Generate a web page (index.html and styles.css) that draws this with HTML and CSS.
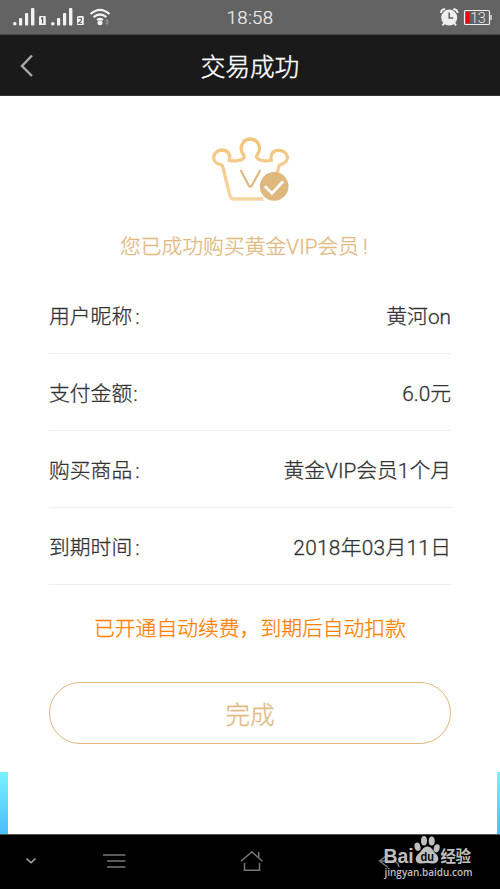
FILE: index.html
```html
<!DOCTYPE html>
<html lang="zh-CN">
<head>
<meta charset="utf-8">
<title>交易成功</title>
<link rel="stylesheet" href="styles.css">
</head>
<body>
<div class="phone">
  <header class="status">
    <svg class="signals" width="100" height="34" viewBox="0 0 100 34" fill="#f2f2f2">
      <g id="sim"><circle cx="1.8" cy="23.8" r="1.8"/><rect x="6" y="18" width="3.2" height="7.6" rx="1"/><rect x="12" y="13" width="3.2" height="12.6" rx="1"/><rect x="18" y="8" width="3.4" height="17.6" rx="1"/><path d="M27 16h4.8a1 1 0 0 1 1 1v8H26v-8z"/></g>
      <use href="#sim" x="38"/>
      <path d="M28 18.6l1.6-.8v5.7" fill="none" stroke="#555" stroke-width="1.3"/>
      <path d="M65.3 18.3h3v2.3l-2.800 2.600h3.500" fill="none" stroke="#555" stroke-width="1.1"/>
      <g fill="none" stroke="#f2f2f2" stroke-width="2.2"><path d="M77.600 14q9.400-8.400 18.800 0M80.600 17.200q6.400-5.400 12.800 0M84 20q3-2.300 6 0"/></g>
      <circle cx="87" cy="22.700" r="2.500"/>
      <path d="M92 21.400l2-2.400 2 2.400zM92 22.600h4l-2 2.300z" fill="#999"/>
    </svg>
    <span class="clock">18:58</span>
    <svg class="power" width="54" height="34" viewBox="0 0 54 34">
      <circle cx="10.200" cy="17.600" r="8" fill="#eee"/>
      <path d="M2 13Q2.200 9 6.200 9.300M14.200 9.300q4-.300 4.400 3.700M5.500 22.800l-2 2.500M15 22.800l2 2.500" fill="none" stroke="#eee" stroke-width="2"/>
      <path d="M10.200 12.500v5.500h4" fill="none" stroke="#606060" stroke-width="1.500"/>
      <rect x="25.500" y="10.500" width="25" height="14" rx="1" fill="none" stroke="#eee" stroke-width="1.200"/>
      <rect x="51.200" y="15" width="1.700" height="5" fill="#ccc"/>
      <rect x="27" y="12" width="3.600" height="11.200" fill="#f00"/>
      <text x="31.300" y="23" font-size="14.500" textLength="15.500" fill="#eee" class="charge">13</text>
    </svg>
  </header>
  <nav class="titlebar">
    <svg class="back" width="14" height="24" viewBox="0 0 14 24"><path d="M12 1.500L2 12l10 10" fill="none" stroke="#aaa" stroke-width="2.400"/></svg>
    <h1>交易成功</h1>
  </nav>
  <div class="backdrop">
    <main>
      <svg class="crown" width="100" height="80" viewBox="0 0 300 240" fill="none">
        <defs><linearGradient id="gold" x2="0" y2="1"><stop stop-color="#f3c47b"/><stop offset="1" stop-color="#f5d6a2"/></linearGradient></defs>
        <path d="M190 207H104Q92 207 89 195L69 112Q67 104 60 103C34 99 34 64 65 60C84 60 92 74 88 91Q102 94 114 92C130 90 136 82 130 74C118 60 122 28 151 27C180 28 184 60 172 74C166 82 174 90 188 92Q200 94 214 91C210 72 220 60 237 61C268 63 270 98 243 103Q238 104 236 110L231 132" stroke="url(#gold)" stroke-width="10"/>
        <path d="M123 122l23 44q5 8 10 0l24-44" stroke="#dfb87e" stroke-width="6.500" stroke-linecap="round"/>
        <circle cx="222.500" cy="169" r="43" fill="#dfb87e"/>
        <path d="M197 171l19 19 31-33" stroke="#fff" stroke-width="8.500" stroke-linecap="round"/>
      </svg>
      <p class="success">您已成功购买黄金VIP会员<span class="bang">!</span></p>
      <dl>
        <div><dt>用户昵称<span class="colon">:</span></dt><dd>黄河on</dd></div>
        <div><dt>支付金额<span class="colon near">:</span></dt><dd>6.0元</dd></div>
        <div><dt>购买商品<span class="colon">:</span></dt><dd>黄金VIP会员1个月</dd></div>
        <div><dt>到期时间<span class="colon">:</span></dt><dd class="date">2018年03月11日</dd></div>
      </dl>
      <p class="renew">已开通自动续费，到期后自动扣款</p>
      <button type="button">完成</button>
    </main>
  </div>
  <footer>
    <svg width="500" height="54" viewBox="0 0 500 54" fill="none" stroke="#777" stroke-width="1.500">
      <path d="M26.500 23.500l4.500 4.200 4.500-4.200" stroke="#aaa"/>
      <path d="M103 20h22.500M107 26h18.500M107 32h18.500" stroke-width="1.700"/>
      <path d="M241 26.200l10.700-9.300L262.500 26.200M258.700 22.500v-5.500M244.500 28v7.300h15V28"/>
      <path d="M388 19.500l-8.500 6.500 8.500 6.500M380 26h12q6 0 7 6"/>
      <g fill="#bfbfbf" stroke="none">
        <text class="brand" x="383.500" y="28" font-size="20.500" textLength="30" lengthAdjust="spacingAndGlyphs">Bai</text>
        <ellipse cx="417.500" cy="11.700" rx="2.900" ry="4.200" transform="rotate(-15 417.500 11.700)"/>
        <ellipse cx="424" cy="5.700" rx="3" ry="4.700"/>
        <ellipse cx="431.700" cy="6" rx="3" ry="4.600"/>
        <ellipse cx="436.700" cy="13.300" rx="2.900" ry="4.100" transform="rotate(15 436.700 13.300)"/>
        <path d="M427.500 11.500C432 11.500 433 16.500 436 19C440.500 23 438 28.800 433 28.500Q427 27.500 421 28.500C415 29 414 22.500 418.500 18.800C422 16 423 11.500 427.500 11.500Z"/>
        <text class="brand" x="420.500" y="25.800" font-size="12.500" textLength="13.500" lengthAdjust="spacingAndGlyphs" fill="#080808">du</text>
        <text class="jingyan" x="440.500" y="26.800" font-size="15.500" textLength="30.500">经验</text>
        <text class="site" x="384.500" y="40.500" font-size="11.500" textLength="88" lengthAdjust="spacingAndGlyphs">jingyan.baidu.com</text>
      </g>
    </svg>
  </footer>
</div>
</body>
</html>
```

FILE: styles.css
```css
* { box-sizing: border-box; }
body, h1, p, dl, dd { margin: 0; }
body { font-family: Roboto, "Noto Sans CJK SC", sans-serif; font-weight: 300; background: #000; }
.phone { width: 500px; height: 889px; display: flex; flex-direction: column; overflow: hidden; }
svg { display: block; }
.status { height: 35px; background: #636363; display: grid; grid-template-columns: 1fr auto 1fr; padding: 0 7px 0 13px; border-bottom: 1px solid #474747; }
.clock { font: 300 18.5px/37px Roboto, sans-serif; color: #eee; padding-right: 6px; letter-spacing: .3px; -webkit-text-stroke: .2px; }
.power { justify-self: end; }
.charge { font-family: Roboto, sans-serif; font-weight: 300; }
.titlebar { height: 61px; background: #1a1a1a; border-bottom: 1px solid #333; display: grid; grid-template-columns: 60px 1fr 60px; align-items: center; color: #fff; }
.back { margin-left: 20px; }
h1 { font-size: 24.6px; line-height: 56px; padding-top: 5px; font-weight: 300; text-align: center; -webkit-text-stroke: .45px; }
.backdrop { height: 738px; padding: 0 3px 0 8px; background: linear-gradient(#fff 676px, #78f1ff 676px, #4bbcff 738px); }
main { height: 738px; background: #fff; padding: 34px 46px 0 41px; }
.crown { margin: 0 auto; }
.success { margin-top: 21px; text-align: center; font-size: 20.8px; line-height: 32px; color: #e2b97f; -webkit-text-stroke: .3px; }
.bang { display: inline-block; width: 21px; padding-left: 4px; text-align: left; }
dl { margin-top: 14px; color: #333; -webkit-text-stroke: .3px; }
dl > div { height: 77px; display: flex; justify-content: space-between; border-bottom: 1px solid #eee; font-size: 20.8px; line-height: 72px; padding-top: 4px; }
.date { letter-spacing: .3px; margin-right: -.3px; }
.colon { margin-left: 3px; }
.colon.near { margin-left: 1px; }
.renew { margin-top: 28px; text-align: center; font-size: 20.8px; line-height: 32px; color: #ff8205; white-space: nowrap; -webkit-text-stroke: .3px; }
button { display: block; width: 402px; height: 62px; margin-top: 37px; padding: 0; border: 1.5px solid #e0b77e; border-radius: 31px; background: #fff; color: #e2b97f; font: 300 24.6px/58px "Noto Sans CJK SC", sans-serif; -webkit-text-stroke: .3px; }
footer { height: 55px; background: #000; border-top: 1px solid #555; }
.brand { font-family: "Liberation Sans", sans-serif; font-weight: 700; }
.jingyan { font-family: "Noto Sans CJK SC", sans-serif; font-weight: 700; }
.site { font-family: "Open Sans", "Noto Sans", sans-serif; font-weight: 600; }
```
